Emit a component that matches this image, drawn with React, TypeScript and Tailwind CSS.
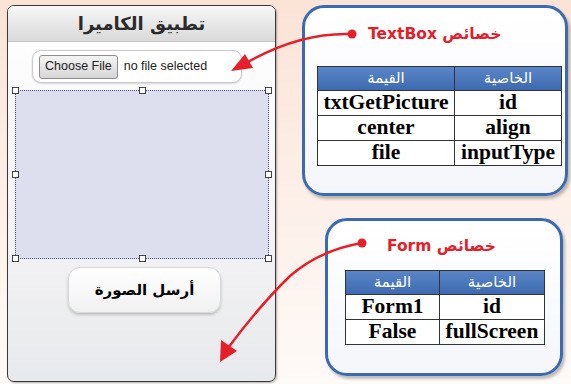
import React from 'react';

const arabic = { fontFamily: '"DejaVu Sans", "Noto Sans", sans-serif' };
const serif = { fontFamily: '"Liberation Serif", "Times New Roman", serif' };

type Row = { value: string; prop: string };

const PropTable: React.FC<{ rows: Row[]; leftW: number; rightW: number }> = ({ rows, leftW, rightW }) => (
  <table className="border-collapse border border-[#333] table-fixed" style={{ width: leftW + rightW }}>
    <thead>
      <tr className="bg-gradient-to-b from-[#5a86c8] to-[#3c68ae] text-white h-[24px]">
        <th className="border border-[#333] font-normal text-[15px] leading-none" style={{ ...arabic, width: leftW }}>القيمة</th>
        <th className="border border-[#333] font-normal text-[15px] leading-none" style={arabic}>الخاصية</th>
      </tr>
    </thead>
    <tbody>
      {rows.map((r) => (
        <tr key={r.prop} className="bg-white h-[25px]">
          <td className="border border-[#333] text-center font-bold text-[21.5px] leading-none text-black whitespace-nowrap" style={serif}>{r.value}</td>
          <td className="border border-[#333] text-center font-bold text-[21.5px] leading-none text-black whitespace-nowrap" style={serif}>{r.prop}</td>
        </tr>
      ))}
    </tbody>
  </table>
);

const Handle: React.FC<{ className: string }> = ({ className }) => (
  <div className={`absolute w-[7px] h-[7px] bg-white border border-[#444] ${className}`} />
);

export default function App() {
  return (
    <div className="relative w-[571px] h-[384px] overflow-hidden flex bg-gradient-to-b from-[#fbe3d6] via-[#fcefe8] to-[#fefaf7]">
      {/* phone */}
      <div className="ml-[7px] mt-[5px] w-[269px] h-[377px] rounded-[7px] border border-[#3a3a3a] flex flex-col overflow-hidden bg-gradient-to-b from-white via-[#f6f6f7] to-[#e8e9ec] shadow-[1px_1px_2px_rgba(0,0,0,0.3)]">
        <div className="h-[36px] shrink-0 flex items-center justify-center bg-gradient-to-b from-[#f7f7f7] to-[#d9d9d9] border-b border-[#c4c4c4]">
          <span className="text-[18px] text-[#2b2b2b] font-bold leading-none" style={arabic} dir="rtl">تطبيق الكاميرا</span>
        </div>
        <div className="flex flex-col">
          <div className="mt-[8px] ml-[24px] w-[210px] h-[33px] rounded-[9px] border border-[#c9c9c9] bg-white shadow-[0_1px_2px_rgba(0,0,0,0.15)] flex items-center pl-[6px] gap-[6px]">
            <div className="h-[24px] px-[5px] flex items-center rounded-[3px] border border-[#8e8e8e] bg-gradient-to-b from-[#f4f4f4] to-[#d6d6d6] text-[12.5px] text-[#222]" style={{ fontFamily: '"Liberation Sans", Arial, sans-serif' }}>
              Choose File
            </div>
            <span className="text-[12.5px] text-[#222]" style={{ fontFamily: '"Liberation Sans", Arial, sans-serif' }}>no file selected</span>
          </div>
          <div className="relative mt-[7px] ml-[7px] w-[254px] h-[169px] bg-[#dedfee] border border-dotted border-[#4b4b9c]">
            <Handle className="-left-[4px] -top-[4px]" />
            <Handle className="left-[123px] -top-[4px]" />
            <Handle className="-right-[4px] -top-[4px]" />
            <Handle className="-left-[4px] top-[80px]" />
            <Handle className="-right-[4px] top-[80px]" />
            <Handle className="-left-[4px] -bottom-[4px]" />
            <Handle className="left-[123px] -bottom-[4px]" />
            <Handle className="-right-[4px] -bottom-[4px]" />
          </div>
          <div className="mt-[8px] ml-[60px] w-[153px] h-[46px] rounded-[12px] border border-[#d8d8d8] bg-gradient-to-b from-white to-[#f1f1f1] shadow-[0_2px_3px_rgba(0,0,0,0.2)] flex items-center justify-center">
            <span className="text-[15px] font-bold text-black" style={arabic} dir="rtl">أرسل الصورة</span>
          </div>
        </div>
      </div>

      {/* property boxes */}
      <div className="ml-[26px] mt-[5px] flex flex-col">
        <div className="w-[266px] h-[191px] rounded-[22px] border-[3px] border-[#3c6ab2] bg-gradient-to-b from-white to-[#f4f6fa] shadow-[2px_3px_3px_rgba(0,0,0,0.25)] flex flex-col">
          <div className="h-[58px] flex items-start pl-[63px] pt-[15px]">
            <span className="text-[15.5px] leading-[22px] font-bold text-[#e3202a]" style={arabic} dir="rtl">خصائص TextBox</span>
          </div>
          <div className="ml-[12px]">
            <PropTable
              leftW={137}
              rightW={108}
              rows={[
                { value: 'txtGetPicture', prop: 'id' },
                { value: 'center', prop: 'align' },
                { value: 'file', prop: 'inputType' },
              ]}
            />
          </div>
        </div>
        <div className="mt-[22px] ml-[23px] w-[238px] h-[158px] rounded-[22px] border-[3px] border-[#3c6ab2] bg-gradient-to-b from-white to-[#f4f6fa] shadow-[2px_3px_3px_rgba(0,0,0,0.25)] flex flex-col">
          <div className="h-[49px] flex items-center pl-[59px] pt-[2px]">
            <span className="text-[15.5px] font-bold text-[#e3202a]" style={arabic} dir="rtl">خصائص Form</span>
          </div>
          <div className="ml-[17px]">
            <PropTable
              leftW={94}
              rightW={106}
              rows={[
                { value: 'Form1', prop: 'id' },
                { value: 'False', prop: 'fullScreen' },
              ]}
            />
          </div>
        </div>
      </div>

      {/* red arrows */}
      <svg className="absolute inset-0 pointer-events-none" width="571" height="384" viewBox="0 0 571 384">
        <path d="M352 34 Q300 32 246 63" fill="none" stroke="#e5202a" strokeWidth="2.5" />
        <polygon points="231,71 245,54 253,68" fill="#e5202a" />
        <circle cx="352" cy="34" r="4.5" fill="#e5202a" />
        <path d="M362 243 Q320 250 290 276 Q260 305 228 348" fill="none" stroke="#e5202a" strokeWidth="2.5" />
        <polygon points="220,362 221,340 237,351" fill="#e5202a" />
        <circle cx="362" cy="243" r="4.5" fill="#e5202a" />
      </svg>
    </div>
  );
}
